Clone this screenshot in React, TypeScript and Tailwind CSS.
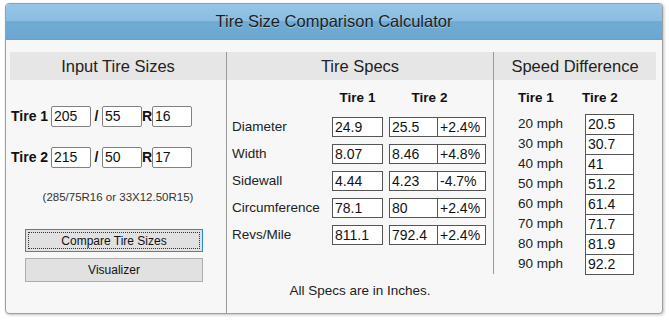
const specRows = [
  { label: "Diameter", t1: "24.9", t2: "25.5", diff: "+2.4%" },
  { label: "Width", t1: "8.07", t2: "8.46", diff: "+4.8%" },
  { label: "Sidewall", t1: "4.44", t2: "4.23", diff: "-4.7%" },
  { label: "Circumference", t1: "78.1", t2: "80", diff: "+2.4%" },
  { label: "Revs/Mile", t1: "811.1", t2: "792.4", diff: "+2.4%" },
];

const speedRows = [
  { mph: "20 mph", value: "20.5" },
  { mph: "30 mph", value: "30.7" },
  { mph: "40 mph", value: "41" },
  { mph: "50 mph", value: "51.2" },
  { mph: "60 mph", value: "61.4" },
  { mph: "70 mph", value: "71.7" },
  { mph: "80 mph", value: "81.9" },
  { mph: "90 mph", value: "92.2" },
];

function SizeInput({ value }: { value: string }) {
  return (
    <div className="w-[40px] h-[21px] border border-[#808080] rounded-[2px] bg-white pl-[2px] text-[14px] leading-[19px] text-[#111]">
      {value}
    </div>
  );
}

function Band({ title }: { title: string }) {
  return (
    <div className="h-[28px] bg-[#e6e6e6] flex items-center justify-center text-[16.5px] text-[#222]">
      {title}
    </div>
  );
}

export default function App() {
  return (
    <div className="w-[669px] h-[320px] bg-white pt-[3px] pl-[5px] font-['Liberation_Sans',Arial,sans-serif]">
      <div className="w-[658px] h-[311px] border border-[#9e9e9e] rounded-[4px] bg-[#f7f7f7] shadow-[1px_1px_3px_rgba(0,0,0,0.25)] flex flex-col overflow-hidden">
        <div className="h-[36px] shrink-0 border-b border-[#6b9fc6] bg-[linear-gradient(#96c5e8_0%,#8abde2_50%,#70abd4_50%,#6ba7d0_100%)] flex items-center justify-center text-[16.5px] text-[#1e1e1e] [text-shadow:0_1px_0_rgba(255,255,255,0.35)]">
          Tire Size Comparison Calculator
        </div>

        <div className="flex-1 flex pt-[12px] pl-[4px] pr-[5px]">
          {/* input column */}
          <div className="w-[217px] border-r border-[#9a9a9a] flex flex-col">
            <Band title="Input Tire Sizes" />
            <div className="mt-[26px] flex items-center pl-[1px] text-[14px] text-[#111]">
              <span className="font-bold w-[40px]">Tire 1</span>
              <SizeInput value="205" />
              <span className="font-bold w-[11px] text-center">/</span>
              <SizeInput value="55" />
              <span className="font-bold w-[10px] text-center">R</span>
              <SizeInput value="16" />
            </div>
            <div className="mt-[20px] flex items-center pl-[1px] text-[14px] text-[#111]">
              <span className="font-bold w-[40px]">Tire 2</span>
              <SizeInput value="215" />
              <span className="font-bold w-[11px] text-center">/</span>
              <SizeInput value="50" />
              <span className="font-bold w-[10px] text-center">R</span>
              <SizeInput value="17" />
            </div>
            <div className="mt-[21px] text-center text-[11.5px] text-[#333]">
              (285/75R16 or 33X12.50R15)
            </div>
            <button className="mt-[23px] ml-[15px] w-[178px] h-[23px] border border-[#2f86db] bg-[#e1e1e1] text-[12px] text-[#111] outline-1 outline-dotted outline-[#333] outline-offset-[-4px]">
              Compare Tire Sizes
            </button>
            <button className="mt-[6px] ml-[15px] w-[178px] h-[24px] border border-[#adadad] bg-[#e1e1e1] text-[12px] text-[#111]">
              Visualizer
            </button>
          </div>

          {/* specs column */}
          <div className="w-[266px] flex flex-col">
            <Band title="Tire Specs" />
            <div className="mt-[10px] flex text-[13.5px] font-bold text-[#111] h-[16px] leading-[16px]">
              <div className="w-[105px]" />
              <div className="w-[51px] text-center">Tire 1</div>
              <div className="w-[6px]" />
              <div className="w-[81px] text-center">Tire 2</div>
            </div>
            <div className="mt-[11px] flex flex-col gap-[7px]">
              {specRows.map((r) => (
                <div key={r.label} className="flex items-center h-[20px] text-[13.5px] text-[#222]">
                  <div className="w-[105px] pl-[5px]">{r.label}</div>
                  <div className="w-[51px] h-[20px] border border-[#555] bg-white pl-[2px] leading-[18px] text-[14px] text-[#111]">
                    {r.t1}
                  </div>
                  <div className="w-[6px]" />
                  <div className="w-[49px] h-[20px] border border-[#555] bg-white pl-[2px] leading-[18px] text-[14px] text-[#111]">
                    {r.t2}
                  </div>
                  <div className="w-[48px] h-[20px] border border-l-0 border-[#555] bg-white pl-[2px] leading-[18px] text-[14px] text-[#111]">
                    {r.diff}
                  </div>
                </div>
              ))}
            </div>
            <div className="mt-[36px] text-center text-[13.5px] text-[#222]">
              All Specs are in Inches.
            </div>
          </div>

          {/* speed column */}
          <div className="w-[163px] self-start border-l border-[#9a9a9a] flex flex-col">
            <Band title="Speed Difference" />
            <div className="mt-[10px] flex text-[13.5px] font-bold text-[#111] h-[16px] leading-[16px] pl-[24px]">
              <div className="w-[64px]">Tire 1</div>
              <div>Tire 2</div>
            </div>
            <div className="mt-[8px] flex flex-col">
              {speedRows.map((r, i) => (
                <div key={r.mph} className="flex items-center h-[20px] text-[13.5px] text-[#222] pl-[24px]">
                  <div className="w-[67px]">{r.mph}</div>
                  <div
                    className={`w-[49px] h-[20px] border-x border-t border-[#555] bg-white pl-[2px] leading-[19px] text-[14px] text-[#111] ${
                      i === speedRows.length - 1 ? "border-b h-[21px]" : ""
                    }`}
                  >
                    {r.value}
                  </div>
                </div>
              ))}
            </div>
          </div>
        </div>
      </div>
    </div>
  );
}
